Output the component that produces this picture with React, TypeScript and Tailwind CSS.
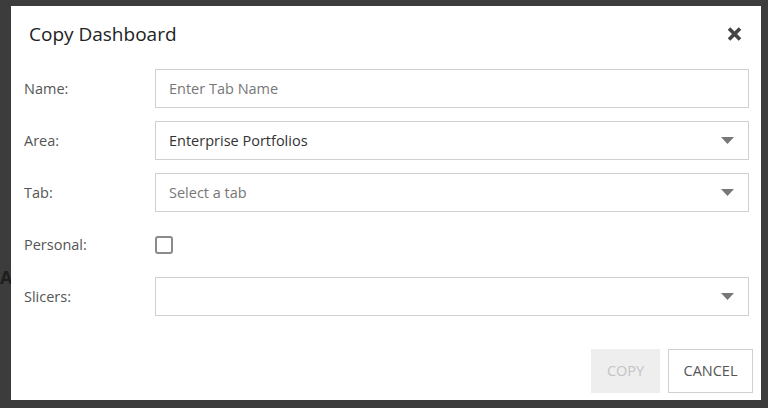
import { useState } from 'react'

const font = { fontFamily: '"Open Sans", "Noto Sans", sans-serif' }

function Caret() {
  return (
    <svg width="13" height="7" viewBox="0 0 13 7" className="shrink-0">
      <path d="M0 0 H13 L6.5 7 Z" fill="#777" />
    </svg>
  )
}

function Row({ label, children }: { label: string; children: React.ReactNode }) {
  return (
    <div className="flex h-[38px] items-center">
      <label className="w-[131px] text-[14.5px] text-[#555]">{label}</label>
      <div className="flex-1">{children}</div>
    </div>
  )
}

function SelectBox({ value, muted }: { value?: string; muted?: boolean }) {
  return (
    <div className="flex h-[39px] items-center justify-between border border-[#d0d0d0] pl-[13px] pr-[14px]">
      <span className={`text-[14.5px] ${muted ? 'text-[#777]' : 'text-[#333]'}`}>{value}</span>
      <Caret />
    </div>
  )
}

export default function App() {
  const [personal, setPersonal] = useState(false)
  return (
    <div className="relative h-[408px] w-[768px] overflow-hidden bg-[#3c3c3c]" style={font}>
      <div className="absolute left-0 top-[268px] text-[18px] font-bold leading-none text-[#1e1e1e]">
        Ap
      </div>
      <div className="absolute left-[11px] top-[6px] flex h-[394px] w-[750px] flex-col bg-white">
        <div className="flex items-center justify-between pl-[18px] pr-[19px] pt-[14px]">
          <h1 className="text-[19px] text-[#222]">Copy Dashboard</h1>
          <svg width="15" height="14" viewBox="0 0 15 14">
            <path d="M2 1.5 L13 12.5 M13 1.5 L2 12.5" stroke="#444" strokeWidth="3.6" strokeLinecap="butt" />
          </svg>
        </div>
        <div className="mt-[21px] flex flex-col gap-[14px] pl-[13px] pr-[12px]">
          <Row label="Name:">
            <input
              className="h-[39px] w-full border border-[#d0d0d0] pl-[13px] text-[14.5px] text-[#333] outline-none placeholder:text-[#777]"
              placeholder="Enter Tab Name"
              style={font}
            />
          </Row>
          <Row label="Area:">
            <SelectBox value="Enterprise Portfolios" />
          </Row>
          <Row label="Tab:">
            <SelectBox value="Select a tab" muted />
          </Row>
          <Row label="Personal:">
            <button
              onClick={() => setPersonal(!personal)}
              className="flex h-[18px] w-[18px] items-center justify-center rounded-[3px] border-2 border-[#8a8a8a] bg-white"
            >
              {personal && <span className="h-[8px] w-[8px] bg-[#555]" />}
            </button>
          </Row>
          <Row label="Slicers:">
            <SelectBox />
          </Row>
        </div>
        <div className="mt-auto flex justify-end gap-[8px] pb-[7px] pr-[8px]">
          <button className="h-[44px] w-[69px] bg-[#eeeeee] text-[14.5px] text-[#c4c4c4]">COPY</button>
          <button className="h-[44px] w-[85px] border border-[#d0d0d0] bg-white text-[14.5px] text-[#555]">CANCEL</button>
        </div>
      </div>
    </div>
  )
}
